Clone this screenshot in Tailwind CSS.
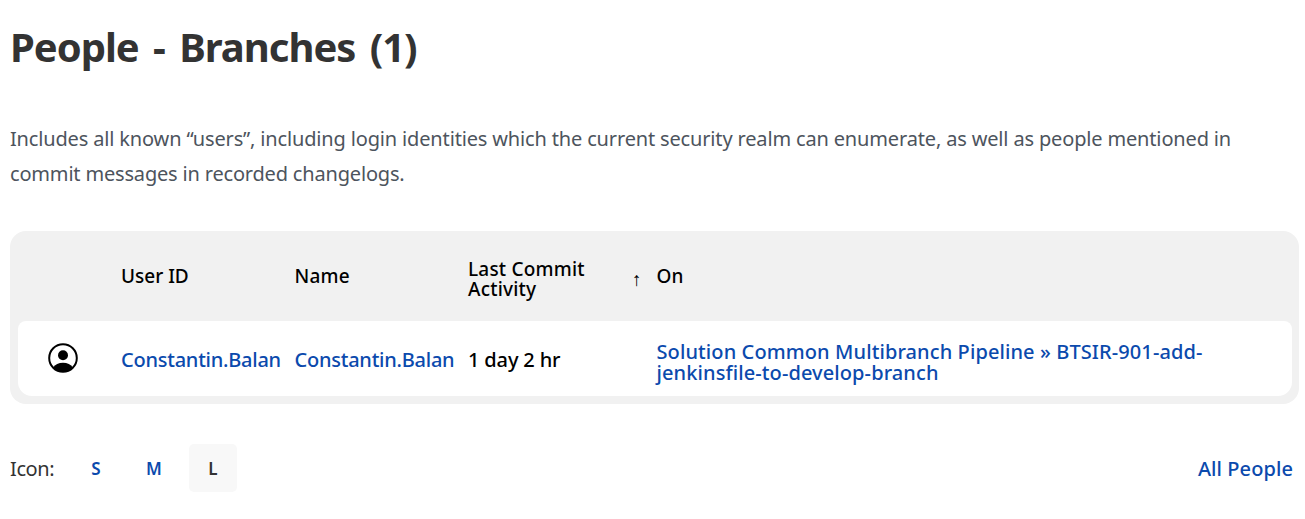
<!DOCTYPE html>
<html lang="en">
<head>
<meta charset="utf-8">
<title>People - Branches</title>
<script src="https://cdn.jsdelivr.net/npm/@tailwindcss/browser@4"></script>
</head>
<body class="bg-white font-['Noto_Sans','Open_Sans',sans-serif] text-black">
<main class="h-[519px] overflow-hidden pl-[10px] pr-[6px] pt-5">
  <h1 class="h-[56px] text-[40px] leading-[54px] font-bold tracking-[-1.02px] [word-spacing:5px] text-[#333333] whitespace-nowrap">People - Branches (1)</h1>
  <p class="mt-[45px] h-[70px] text-[20px] leading-[35px] tracking-[-0.157px] text-[#4d545d] whitespace-nowrap">Includes all known “users”, including login identities which the current security realm can enumerate, as well as people mentioned in<br><span class="tracking-[-0.18px]">commit messages in recorded changelogs.</span></p>
  <section class="mt-[40px] h-[172.5px] rounded-[16px] bg-[#f1f1f1] pl-2 pr-[7px] pb-2 text-[19px] leading-5 font-medium whitespace-nowrap">
    <div class="grid h-[90px] grid-cols-[103px_173.5px_173.5px_188.5px_1fr] items-center">
      <span></span>
      <span>User ID</span>
      <span class="tracking-[0.2px]">Name</span>
      <span class="flex items-center pt-[6px]"><span class="w-[164px] tracking-[0.2px]">Last Commit<br>Activity</span><span class="text-[19px] font-normal">↑</span></span>
      <span>On</span>
    </div>
    <div class="grid h-[75px] grid-cols-[103px_173.5px_173.5px_188.5px_1fr] items-center rounded-t-[8px] rounded-b-[14px] bg-white text-[20px] leading-[21px]">
      <svg class="ml-[29px] -mt-[2px] size-8" viewBox="0 0 32 32" fill="none"><circle cx="16" cy="16" r="13.8" stroke="#000" stroke-width="2"/><circle cx="16" cy="13.2" r="5" fill="#000"/><path d="M6 25.8C8 22.4 11.8 20.8 16 20.8s8 1.6 10 5A14.8 14.8 0 0 1 16 30 14.8 14.8 0 0 1 6 25.8Z" fill="#000"/></svg>
      <a class="pt-[2px] tracking-[-0.24px] text-[#0b4aad]">Constantin.Balan</a>
      <a class="pt-[2px] tracking-[-0.24px] text-[#0b4aad]">Constantin.Balan</a>
      <span class="pt-[2px] tracking-[-0.15px]">1 day 2 hr</span>
      <a class="pt-[6px] tracking-[0.1px] text-[#0b4aad]">Solution Common Multibranch Pipeline » BTSIR-901-add-<br>jenkinsfile-to-develop-branch</a>
    </div>
  </section>
  <footer class="mt-[40.5px] flex h-12 items-center text-[20px]">
    <span class="w-[62px] pt-[2px] tracking-[-0.4px] text-[#333]">Icon:</span>
    <div class="flex gap-[10px] text-[17px] font-semibold text-[#0b4aad]">
      <a class="grid size-12 place-items-center pt-px">S</a>
      <a class="grid size-12 place-items-center pt-px">M</a>
      <span class="ml-[1px] grid size-12 place-items-center rounded-[5px] bg-[#f8f8f8] pt-px text-[#333]">L</span>
    </div>
    <a class="ml-auto pt-[2px] pr-[6px] font-medium tracking-[0.08px] text-[#0b4aad]">All People</a>
  </footer>
</main>
</body>
</html>
